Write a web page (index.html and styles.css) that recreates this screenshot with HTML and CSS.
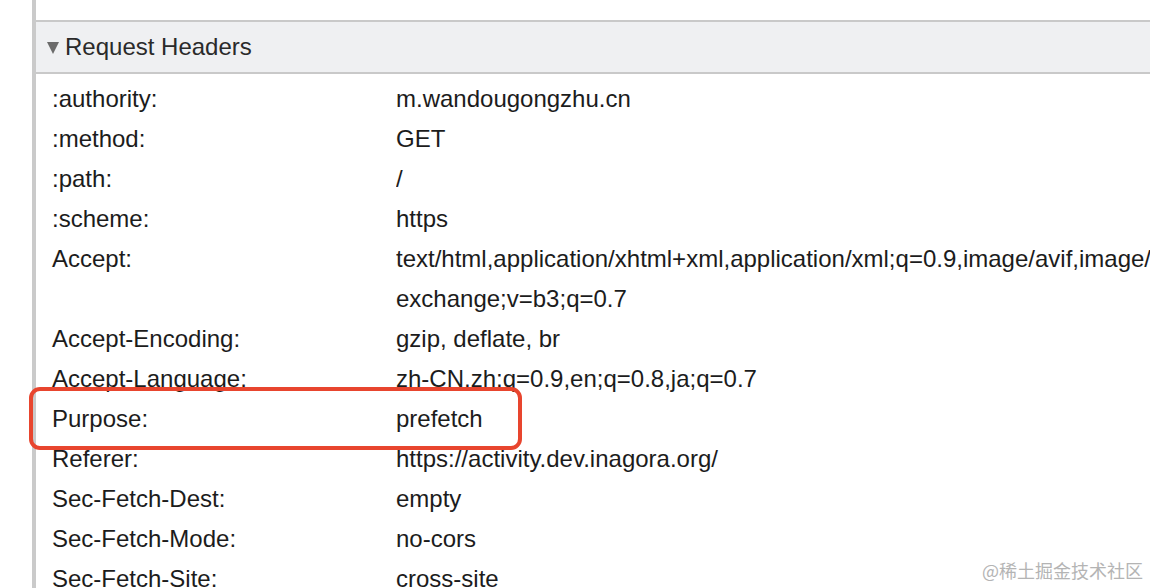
FILE: index.html
```html
<!DOCTYPE html>
<html lang="en">
<head>
    <meta charset="UTF-8">
    <title>Request Headers</title>
    <link rel="stylesheet" href="styles.css">
</head>
<body>
    <div class="Page">
        <div class="Pane">
            <div class="SectionHead">
                <span class="Arrow"></span>
                <span class="SectionTitle">Request Headers</span>
            </div>
            <div class="HeaderList">
                <div class="Row"><div class="Name">:authority:</div><div class="Value">m.wandougongzhu.cn</div></div>
                <div class="Row"><div class="Name">:method:</div><div class="Value">GET</div></div>
                <div class="Row"><div class="Name">:path:</div><div class="Value">/</div></div>
                <div class="Row"><div class="Name">:scheme:</div><div class="Value">https</div></div>
                <div class="Row">
                    <div class="Name">Accept:</div>
                    <div class="Value">
                        <div class="Line">text/html,application/xhtml+xml,application/xml;q=0.9,image/avif,image/webp,image/apng,*/*;q=0.8,application/signed-</div>
                        <div class="Line">exchange;v=b3;q=0.7</div>
                    </div>
                </div>
                <div class="Row"><div class="Name">Accept-Encoding:</div><div class="Value">gzip, deflate, br</div></div>
                <div class="Row"><div class="Name">Accept-Language:</div><div class="Value">zh-CN,zh;q=0.9,en;q=0.8,ja;q=0.7</div></div>
                <div class="Row Highlight"><div class="Name">Purpose:</div><div class="Value">prefetch</div></div>
                <div class="Row"><div class="Name">Referer:</div><div class="Value">https://activity.dev.inagora.org/</div></div>
                <div class="Row"><div class="Name">Sec-Fetch-Dest:</div><div class="Value">empty</div></div>
                <div class="Row"><div class="Name">Sec-Fetch-Mode:</div><div class="Value">no-cors</div></div>
                <div class="Row"><div class="Name">Sec-Fetch-Site:</div><div class="Value">cross-site</div></div>
            </div>
        </div>
    </div>
    <div class="Watermark">@稀土掘金技术社区</div>
</body>
</html>
```

FILE: styles.css
```css
body, html {
    margin: 0;
    height: 100%;
    overflow: hidden;
    background-color: #fff;
    color: #1c1c1c;
    font-family: "Liberation Sans", Arial, Helvetica, sans-serif;
}

.Page {
    padding-left: 32px;
    height: 100%;
}

.Pane {
    border-left: 4px solid #cacaca;
    height: 100%;
    padding-top: 20px;
    box-sizing: border-box;
}

.SectionHead {
    display: flex;
    align-items: center;
    height: 50px;
    padding-left: 11px;
    background-color: #eff0f2;
    border-top: 2px solid #c9c9c9;
    border-bottom: 2px solid #c9c9c9;
}

.Arrow {
    width: 0;
    height: 0;
    border-left: 6.5px solid transparent;
    border-right: 6.5px solid transparent;
    border-top: 12px solid #6b6b6b;
    margin-right: 6px;
    margin-top: 1px;
}

.SectionTitle {
    font-size: 24px;
    color: #2a2a2a;
}

.HeaderList {
    padding-top: 5px;
    padding-left: 16px;
}

.Row {
    display: flex;
    font-size: 24px;
    line-height: 40px;
    position: relative;
}

.Name {
    width: 344px;
    flex-shrink: 0;
}

.Value {
    flex: 1;
    overflow: hidden;
}

.Line {
    white-space: nowrap;
}

.Highlight::after {
    content: "";
    position: absolute;
    left: -23px;
    top: -12px;
    width: 485px;
    height: 55px;
    border: 4px solid #e8452e;
    border-radius: 11px;
}

.Watermark {
    position: absolute;
    right: 7px;
    bottom: 5px;
    font-family: "Noto Sans CJK SC", sans-serif;
    font-size: 18px;
    color: #b4b4b4;
}
```
